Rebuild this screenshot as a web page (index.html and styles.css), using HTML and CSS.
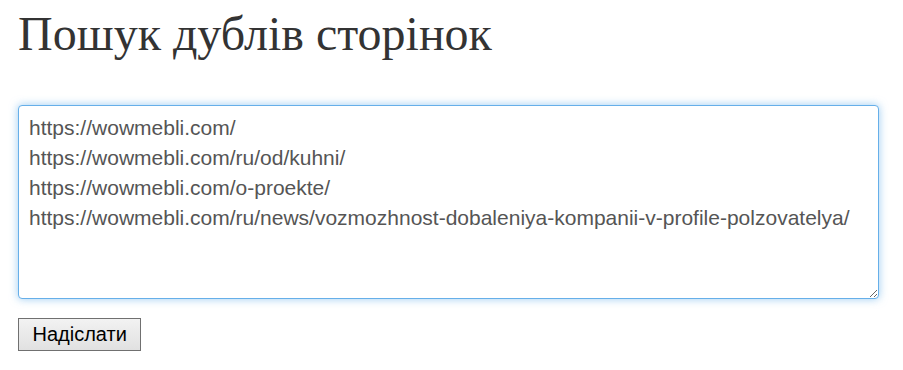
FILE: index.html
```html
<!DOCTYPE html>
<html lang="uk">
<head>
    <meta charset="UTF-8">
    <title>Пошук дублів сторінок</title>
    <link rel="stylesheet" href="styles.css">
</head>
<body>
    <div class="container">
        <h1>Пошук дублів сторінок</h1>
        <form class="search-form">
            <textarea class="urls" name="urls">https://wowmebli.com/
https://wowmebli.com/ru/od/kuhni/
https://wowmebli.com/o-proekte/
https://wowmebli.com/ru/news/vozmozhnost-dobaleniya-kompanii-v-profile-polzovatelya/</textarea>
            <div class="actions">
                <button type="submit">Надіслати</button>
            </div>
        </form>
    </div>
</body>
</html>
```

FILE: styles.css
```css
body {
    margin: 0;
    background-color: #fff;
    font-family: "Liberation Sans", Arial, sans-serif;
}

.container {
    padding: 0 24px 0 18px;
}

h1 {
    margin: 0;
    padding-top: 6px;
    height: 99px;
    font-family: "Liberation Serif", "Times New Roman", serif;
    font-size: 48px;
    font-weight: normal;
    line-height: 56px;
    color: #333;
}

.urls {
    display: block;
    box-sizing: border-box;
    width: 100%;
    height: 194px;
    padding: 7px 10px 11px;
    font-family: "Liberation Sans", Arial, sans-serif;
    font-size: 21px;
    line-height: 30px;
    color: #555;
    border: 1px solid #66afe9;
    border-radius: 4px;
    outline: none;
    box-shadow: 0 0 9px rgba(102, 175, 233, 0.65);
    resize: both;
}

.actions {
    margin-top: 19px;
}

button {
    height: 33px;
    padding: 0 13.5px;
    font-family: "Liberation Sans", Arial, sans-serif;
    font-size: 20px;
    color: #000;
    background: linear-gradient(#f2f2f2, #e1e1e1);
    border: 1px solid #707070;
    border-radius: 0;
}
```
